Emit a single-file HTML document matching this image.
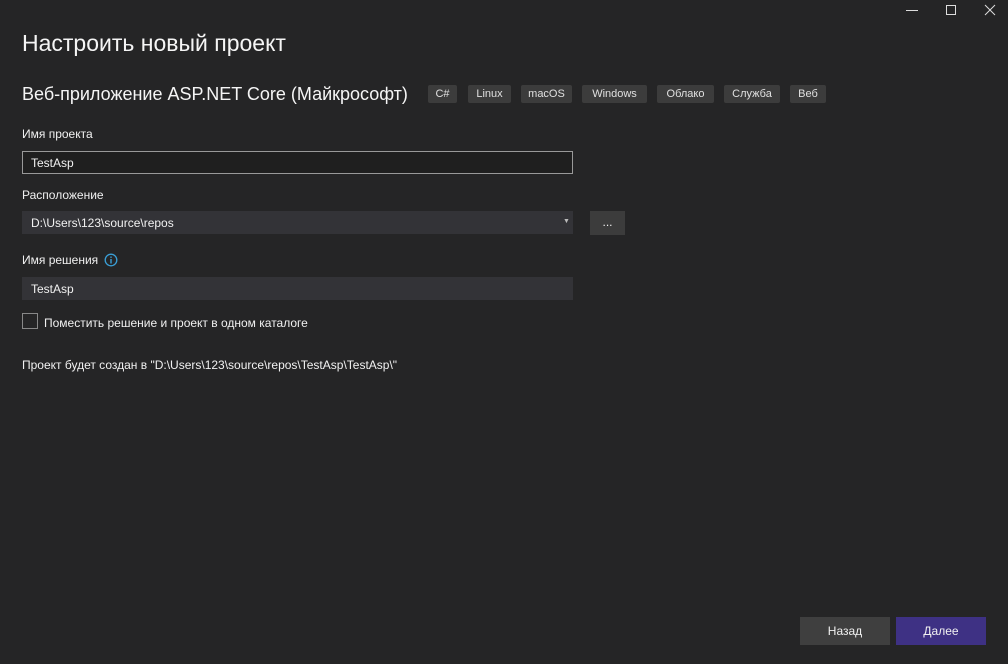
<!DOCTYPE html>
<html><head><meta charset="utf-8"><style>
body{margin:0;width:1008px;height:664px;background:#252526;font-family:"Liberation Sans","DejaVu Sans",sans-serif;color:#f1f1f1;position:relative;overflow:hidden}
.a{position:absolute;white-space:nowrap}
.tag{position:absolute;top:85px;height:18px;background:#3c3c3c;border-radius:2px;font-size:11px;line-height:18px;text-align:center;color:#e0e0e0}
.inp{position:absolute;left:22px;width:551px;height:23px;background:#333337;font-size:12px;line-height:24px;box-sizing:border-box;padding-left:9px}
.lbl{position:absolute;left:22px;font-size:12px;color:#f1f1f1}
.btn{position:absolute;top:617px;width:90px;height:28px;font-size:12px;line-height:28px;text-align:center}
</style></head><body>
<svg class="a" style="left:900px;top:0" width="108" height="22">
<line x1="6" y1="10.5" x2="18" y2="10.5" stroke="#ddd" stroke-width="1"/>
<rect x="46.5" y="5.5" width="9" height="9" fill="none" stroke="#ddd"/>
<path d="M85 5 L95 15 M95 5 L85 15" stroke="#ddd" stroke-width="1"/>
</svg>
<div class="a" style="left:22px;top:30px;font-size:23px;color:#f5f5f5">Настроить новый проект</div>
<div class="a" style="left:22px;top:84px;font-size:18px;color:#f5f5f5">Веб-приложение ASP.NET Core (Майкрософт)</div>
<div class="tag" style="left:428px;width:29px">C#</div>
<div class="tag" style="left:468px;width:43px">Linux</div>
<div class="tag" style="left:521px;width:51px">macOS</div>
<div class="tag" style="left:582px;width:65px">Windows</div>
<div class="tag" style="left:657px;width:57px">Облако</div>
<div class="tag" style="left:724px;width:56px">Служба</div>
<div class="tag" style="left:790px;width:36px">Веб</div>
<div class="lbl" style="top:127px">Имя проекта</div>
<div class="inp" style="top:151px;background:#1f1f1f;border:1px solid #999;line-height:22px;padding-left:8px">TestAsp</div>
<div class="lbl" style="top:188px">Расположение</div>
<div class="inp" style="top:211px">D:\Users\123\source\repos</div>
<div class="a" style="left:563px;top:218px;font-size:7px;color:#bbb">▼</div>
<div class="a" style="left:590px;top:211px;width:35px;height:24px;background:#3c3c3c;text-align:center;font-size:12px;line-height:22px">...</div>
<div class="lbl" style="top:253px">Имя решения</div>
<svg class="a" style="left:104px;top:253px" width="14" height="14"><circle cx="7" cy="7" r="5.8" fill="none" stroke="#3a9fd6" stroke-width="1.3"/><rect x="6.3" y="6" width="1.4" height="4.5" fill="#3a9fd6"/><rect x="6.3" y="3.5" width="1.4" height="1.4" fill="#3a9fd6"/></svg>
<div class="inp" style="top:277px">TestAsp</div>
<div class="a" style="left:22px;top:313px;width:14px;height:14px;border:1px solid #888;box-sizing:content-box"></div>
<div class="a" style="left:44px;top:316px;font-size:12px">Поместить решение и проект в одном каталоге</div>
<div class="a" style="left:22px;top:358px;font-size:12px">Проект будет создан в "D:\Users\123\source\repos\TestAsp\TestAsp\"</div>
<div class="btn" style="left:800px;background:#3f3f3f">Назад</div>
<div class="btn" style="left:896px;background:#3e3184">Далее</div>
</body></html>
